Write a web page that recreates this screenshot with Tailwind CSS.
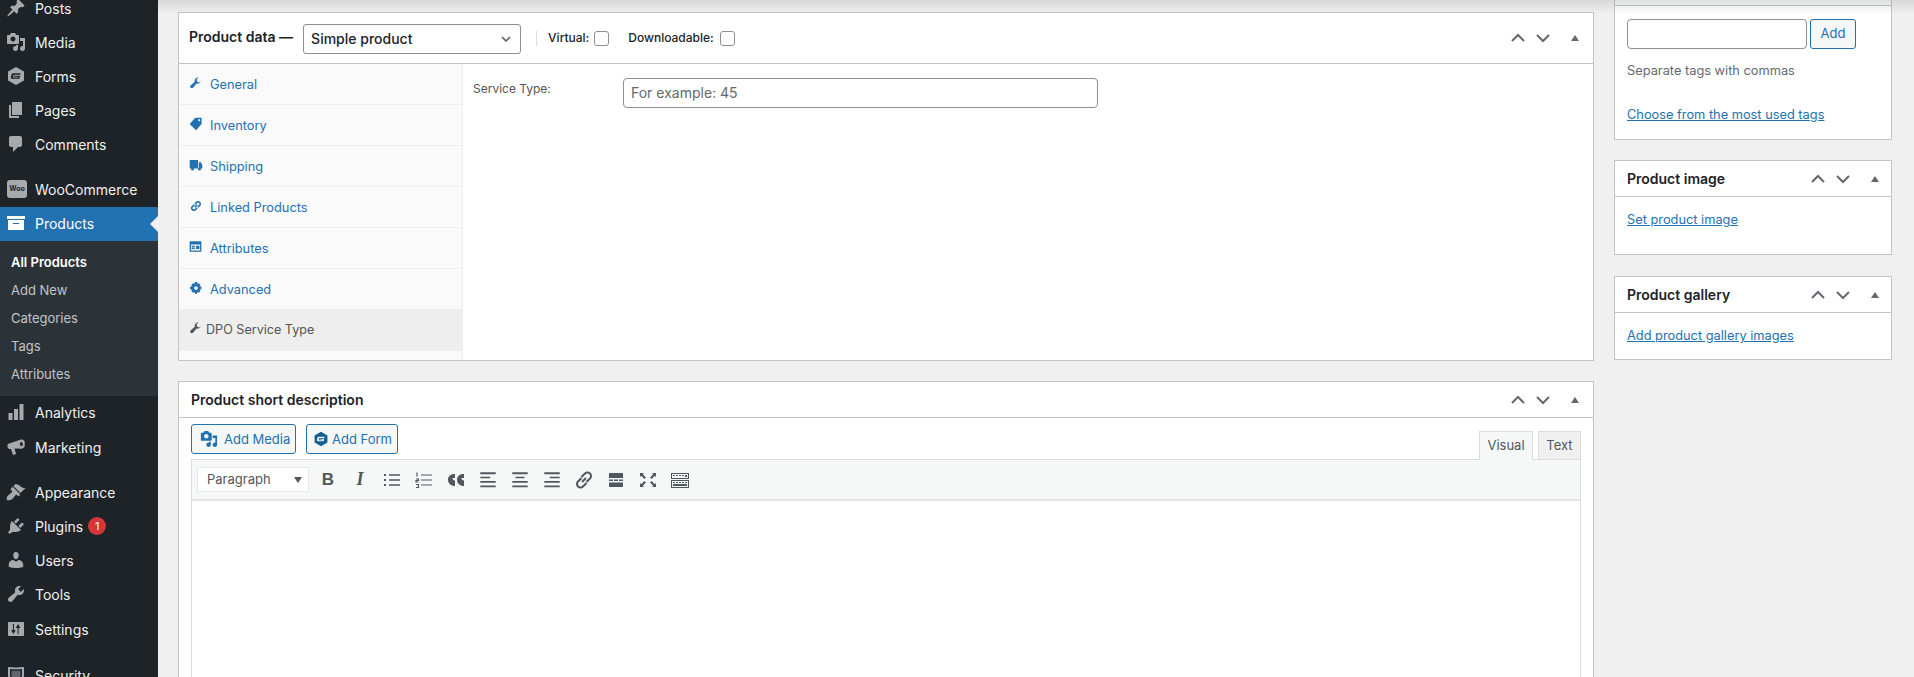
<!DOCTYPE html>
<html lang="en">
<head>
    <meta charset="UTF-8">
    <title>Edit product</title>
    <script src="https://cdn.jsdelivr.net/npm/@tailwindcss/browser@4"></script>
</head>
<body class="h-[677px] overflow-hidden bg-[#f0f0f1] font-[Inter,sans-serif] text-[#1d2327]">
<div class="flex h-[677px] overflow-hidden">

    <!-- Admin sidebar -->
    <aside class="w-[158px] shrink-0 h-[677px] overflow-hidden bg-[#1d2327] text-[14px] text-[#f0f0f1]">
        <ul class="-mt-[9px]">
            <li class="h-[34px] flex items-center">
                <svg class="w-[20px] h-[20px] ml-[6px] mr-[9px] fill-[#a7aaad]" viewBox="0 0 20 20"><path d="M10.44 3.02l1.82-1.82 6.36 6.35-1.83 1.82c-1.05-.68-2.48-.57-3.41.36l-.75.75c-.92.93-1.04 2.35-.35 3.41l-1.83 1.82-2.41-2.41-2.8 2.79c-.42.42-3.38 2.71-3.8 2.29s1.86-3.39 2.28-3.81l2.79-2.79L4.1 9.36l1.83-1.82c1.05.69 2.48.57 3.4-.36l.75-.75c.93-.92 1.05-2.35.36-3.41z"/></svg>
                Posts
            </li>
            <li class="h-[34px] flex items-center">
                <svg class="w-[20px] h-[20px] ml-[6px] mr-[9px] fill-[#a7aaad]" viewBox="0 0 20 20"><path d="M13 11V4c0-.55-.45-1-1-1h-1.67L9 1H5L3.67 3H2c-.55 0-1 .45-1 1v7c0 .55.45 1 1 1h10c.55 0 1-.45 1-1zM7 4.5c1.38 0 2.5 1.12 2.5 2.5S8.38 9.5 7 9.5 4.5 8.38 4.5 7 5.62 4.5 7 4.5zM14 6h5v10.5c0 1.38-1.12 2.5-2.5 2.5S14 17.88 14 16.5s1.12-2.5 2.5-2.5c.17 0 .34.02.5.05V9h-3V6zm-4 8.05V13h2v3.5c0 1.38-1.12 2.5-2.5 2.5S7 17.88 7 16.5 8.12 14 9.5 14c.17 0 .34.02.5.05z"/></svg>
                Media
            </li>
            <li class="h-[34px] flex items-center">
                <svg class="w-[20px] h-[20px] ml-[6px] mr-[9px] fill-[#a7aaad]" viewBox="0 0 20 20" fill-rule="evenodd"><path d="M10 1l8 4.500v9L10 19l-8-4.500v-9zM7.200 7.300c-.9 0-1.500.6-1.700 1.400l-.6 2.500c-.2.8.3 1.500 1.100 1.500h7.300l.7-2.900H8.200l-.2.9h4.100l-.2.8H7l.5-2.200c.1-.3.3-.5.6-.5h6.200l.2-1.500z"/></svg>
                Forms
            </li>
            <li class="h-[34px] flex items-center">
                <svg class="w-[20px] h-[20px] ml-[6px] mr-[9px] fill-[#a7aaad]" viewBox="0 0 20 20"><path d="M6 15V2h10v13H6zm-1 1h8v2H3V5h2v11z"/></svg>
                Pages
            </li>
            <li class="h-[34px] flex items-center">
                <svg class="w-[20px] h-[20px] ml-[6px] mr-[9px] fill-[#a7aaad]" viewBox="0 0 20 20"><path d="M5 2h9c1.100 0 2 .9 2 2v7c0 1.100-.9 2-2 2h-2l-5 5v-5H5c-1.100 0-2-.9-2-2V4c0-1.100.9-2 2-2z"/></svg>
                Comments
            </li>
            <li class="h-[34px] flex items-center mt-[12px] pb-[2px]">
                <span class="w-[20px] h-[18px] shrink-0 ml-[7px] mr-[8px] rounded-[3px] bg-[#a7aaad] text-[#1d2327] text-[7px] font-bold flex items-center justify-center">Woo</span>
                WooCommerce
            </li>
            <li class="relative h-[34px] flex items-center pb-[2px] bg-[#2271b1] text-white">
                <svg class="w-[20px] h-[20px] ml-[6px] mr-[9px] fill-white" viewBox="0 0 20 20" fill-rule="evenodd"><path d="M19 6V3H1v3zM2 7h16v10H2zm5 3v1h6v-1z"/></svg>
                Products
                <span class="absolute right-0 top-[9px] border-y-[8px] border-r-[8px] border-y-transparent border-r-[#f0f0f1]"></span>
            </li>
        </ul>
        <ul class="bg-[#2c3338] py-[8px] pl-[11px] text-[13px] text-[#c3c4c7]">
            <li class="h-[28px] flex items-center font-semibold text-white">All Products</li>
            <li class="h-[28px] flex items-center">Add New</li>
            <li class="h-[28px] flex items-center">Categories</li>
            <li class="h-[28px] flex items-center">Tags</li>
            <li class="h-[27px] flex items-center">Attributes</li>
        </ul>
        <ul>
            <li class="h-[34px] flex items-center pb-[2px]">
                <svg class="w-[20px] h-[20px] ml-[6px] mr-[9px] fill-[#a7aaad]" viewBox="0 0 20 20"><path d="M2.500 11h4v7h-4zM8 7h4v11H8zM13.500 2h4v16h-4z"/></svg>
                Analytics
            </li>
            <li class="h-[34px] flex items-center">
                <svg class="w-[20px] h-[20px] ml-[6px] mr-[9px] fill-[#a7aaad]" viewBox="0 0 20 20" fill-rule="evenodd"><path d="M15 2.500a3.300 3.300 0 0 1 3.500 4.700 3.300 3.300 0 0 1-2.500 4.500L8.500 11.500 10 17l-3 1-2-6H3.500C2.500 12 1.500 11 1.500 9.800V8.500c0-1 .7-1.800 1.700-2zM15 5c-1 .2-1.300 1.400-1 2.500s1.200 1.900 2 1.500 1-1.400.7-2.400S15.800 4.800 15 5z"/></svg>
                Marketing
            </li>
            <li class="h-[34px] flex items-center mt-[12px] pb-[2px]">
                <svg class="w-[20px] h-[20px] ml-[6px] mr-[9px] fill-[#a7aaad]" viewBox="0 0 20 20"><path d="M14.480 11.060L7.410 3.990l1.500-1.500c.5-.56 2.300-.47 3.510.32 1.210.8 1.430 1.280 2.910 2.100 1.180.64 2.450 1.260 4.450.85zm-.71.71L6.700 4.700 4.930 6.470c-.39.39-.39 1.020 0 1.410l1.060 1.060c.39.39.39 1.030 0 1.420-.6.6-1.430 1.110-2.210 1.690-.35.26-.7.53-1.010.84C1.430 13.230.1 16.200 1 18c1.800.9 4.770-.43 6.110-1.770.31-.31.58-.66.840-1.010.58-.78 1.090-1.610 1.690-2.210.39-.39 1.030-.39 1.420 0l1.060 1.060c.39.39 1.020.39 1.410 0z"/></svg>
                Appearance
            </li>
            <li class="h-[34px] flex items-center pb-[2px]">
                <svg class="w-[20px] h-[20px] ml-[6px] mr-[9px] fill-[#a7aaad]" viewBox="0 0 20 20"><path d="M13.110 4.360L9.870 7.600 8 5.730l3.240-3.240c.35-.34 1.050-.2 1.560.32.52.51.66 1.210.31 1.550zm-8 1.770l.91-1.120 9.010 9.010-1.190.84c-.71.71-2.630 1.160-3.820 1.160H6.140L4.900 17.260c-.59.59-1.540.59-2.120 0-.59-.58-.59-1.530 0-2.120l1.240-1.240v-3.880c0-1.130.4-3.190 1.090-3.890zm7.260 3.970l3.240-3.240c.34-.35 1.040-.21 1.550.31.52.51.66 1.210.31 1.550l-3.240 3.250z"/></svg>
                Plugins
                <span class="ml-[5px] w-[18px] h-[18px] rounded-full bg-[#d63638] text-white text-[11px] flex items-center justify-center">1</span>
            </li>
            <li class="h-[34px] flex items-center pb-[2px]">
                <svg class="w-[20px] h-[20px] ml-[6px] mr-[9px] fill-[#a7aaad]" viewBox="0 0 20 20"><path d="M10 9.250c-2.270 0-2.730-3.440-2.730-3.440C7 4.020 7.820 2 9.970 2c2.160 0 2.980 2.020 2.710 3.810 0 0-.41 3.440-2.680 3.440zm0 2.570L12.720 10c2.390 0 4.520 2.330 4.520 4.530v2.490s-3.650 1.130-7.240 1.130c-3.650 0-7.240-1.130-7.240-1.130v-2.490c0-2.250 1.940-4.480 4.470-4.480z"/></svg>
                Users
            </li>
            <li class="h-[34px] flex items-center pb-[2px]">
                <svg class="w-[20px] h-[20px] ml-[6px] mr-[9px] fill-[#a7aaad]" viewBox="0 0 20 20"><path d="M16.680 9.770c-1.340 1.340-3.300 1.670-4.950.99l-5.410 6.520c-.99.99-2.590.99-3.580 0s-.99-2.590 0-3.570l6.520-5.420c-.68-1.650-.35-3.610.99-4.950 1.280-1.280 3.120-1.620 4.720-1.060l-2.890 2.890 2.820 2.820 2.860-2.870c.53 1.580.18 3.390-1.080 4.650z"/></svg>
                Tools
            </li>
            <li class="h-[34px] flex items-center">
                <svg class="w-[20px] h-[20px] ml-[6px] mr-[9px] fill-[#a7aaad]" viewBox="0 0 20 20" fill-rule="evenodd"><path d="M3 3h14c.6 0 1 .4 1 1v12c0 .6-.4 1-1 1H3c-.6 0-1-.4-1-1V4c0-.6.4-1 1-1zm3.900 2v6H5l2.400 4 2.400-4H8V5zm5.700 10V9h1.900l-2.400-4-2.400 4h1.900v6z"/></svg>
                Settings
            </li>
            <li class="h-[34px] flex items-center mt-[12px]">
                <svg class="w-[20px] h-[20px] ml-[6px] mr-[9px] fill-[#a7aaad]" viewBox="0 0 20 20" fill-rule="evenodd"><path d="M2 2c5 .6 11 .6 16 0v8c0 4-4 7-8 9-4-2-8-5-8-9zm2 2v6c0 3 3 5 6 7 3-2 6-4 6-7V4c-4 .4-8 .4-12 0z"/><path d="M5.500 5.500c3 .3 6 .3 9 0V10c0 2-2 4-4.500 5.500C7.500 14 5.500 12 5.500 10z" opacity=".5"/></svg>
                Security
            </li>
        </ul>
    </aside>

    <!-- Content -->
    <div class="relative flex-1 flex pl-[20px] gap-[20px]">
        <div class="absolute left-0 right-0 top-0 h-[14px] bg-gradient-to-b from-black/10 to-transparent"></div>

        <main class="w-[1416px] shrink-0 pt-[12px]">
            <!-- Product data -->
            <section class="h-[349px] bg-white border border-[#c3c4c7] flex flex-col">
                <div class="h-[51px] shrink-0 border-b border-[#c3c4c7] flex items-center pl-[10px] pr-[14px] text-[12px] font-medium">
                    <h2 class="text-[14px] font-semibold mr-[10px] -mt-[3px]">Product data —</h2>
                    <div class="w-[218px] h-[30px] shrink-0 -mb-[1px] border border-[#8c8f94] rounded-[3px] flex items-center justify-between pl-[7px] pr-[8px] text-[14px]">
                        Simple product
                        <svg class="w-[12px] h-[12px] fill-none stroke-[#50575e] stroke-[1.5]" viewBox="0 0 12 12"><path d="M2 4l4 4 4-4"/></svg>
                    </div>
                    <span class="w-px h-[15px] bg-[#dcdcde] ml-[15px] mr-[11px]"></span>
                    Virtual:
                    <span class="w-[15px] h-[15px] shrink-0 ml-[5px] border border-[#8c8f94] rounded-[3px]"></span>
                    <span class="ml-[19px]">Downloadable:</span>
                    <span class="w-[15px] h-[15px] shrink-0 ml-[6px] border border-[#8c8f94] rounded-[3px]"></span>
                    <div class="ml-auto flex items-center gap-[11px]">
                        <svg class="w-[14px] h-[14px] fill-none stroke-[#646970] stroke-2" viewBox="0 0 14 14"><path d="M1 10l6-6 6 6"/></svg>
                        <svg class="w-[14px] h-[14px] fill-none stroke-[#646970] stroke-2" viewBox="0 0 14 14"><path d="M1 4l6 6 6-6"/></svg>
                        <span class="ml-[10px] border-x-[4px] border-b-[6px] border-x-transparent border-b-[#646970]"></span>
                    </div>
                </div>
                <div class="flex-1 flex">
                    <ul class="w-[284px] shrink-0 bg-[#fafafa] border-r border-[#eeeeee] text-[12.8px] text-[#2271b1]">
                        <li class="h-[41px] pt-[2px] border-b border-[#eeeeee] flex items-center pl-[11px]">
                            <svg class="w-[12px] h-[12px] -mt-[4px] mr-[8px] fill-[#2271b1]" viewBox="0 0 20 20"><path d="M18 7c-1 3-4 5-7 4l-6 7c-1 1-3 1-4 0s-1-3 0-4l7-6c-1-3 1-6 4-7l2 0-3 3 1 4 4 1 3-3z"/></svg>
                            General
                        </li>
                        <li class="h-[41px] pt-[2px] border-b border-[#eeeeee] flex items-center pl-[10px]">
                            <svg class="w-[14px] h-[14px] -mt-[5px] mr-[7px] fill-[#2271b1]" viewBox="0 0 20 20" fill-rule="evenodd"><path d="M9 1h9v9l-8 9-9-9zm5.500 2a1.500 1.500 0 1 0 .01 0z"/></svg>
                            Inventory
                        </li>
                        <li class="h-[41px] pt-[2px] border-b border-[#eeeeee] flex items-center pl-[10px]">
                            <svg class="w-[14px] h-[14px] -mt-[4px] mr-[7px] fill-[#2271b1]" viewBox="0 0 20 20"><path d="M1 3h12v12H1zM14 6h3l2 4v5h-5z"/><circle cx="5" cy="16" r="2"/><circle cx="15" cy="16" r="2"/></svg>
                            Shipping
                        </li>
                        <li class="h-[41px] pt-[2px] border-b border-[#eeeeee] flex items-center pl-[11px]">
                            <svg class="w-[12px] h-[12px] -mt-[4px] mr-[8px] fill-none stroke-[#2271b1] stroke-[2.500]" viewBox="0 0 20 20"><path d="M8 12l4-4M7 8l-3 3a3.500 3.500 0 0 0 5 5l3-3M13 12l3-3a3.500 3.500 0 0 0-5-5L8 7"/></svg>
                            Linked Products
                        </li>
                        <li class="h-[41px] pt-[1px] border-b border-[#eeeeee] flex items-center pl-[10px]">
                            <svg class="w-[13px] h-[13px] -mt-[4px] mr-[8px] fill-[#2271b1]" viewBox="0 0 20 20" fill-rule="evenodd"><path d="M1 2h18v16H1zm2 5v9h14V7zm1 2h5v2H4zm0 3h5v2H4zm7-3h5v5h-5z"/></svg>
                            Attributes
                        </li>
                        <li class="h-[40px] pt-[1px] flex items-center pl-[11px]">
                            <svg class="w-[12px] h-[12px] -mt-[4px] mr-[8px] fill-[#2271b1]" viewBox="0 0 20 20" fill-rule="evenodd"><path d="M8 0h4l.5 3 2-1 3 3-1.500 2 3 1v4l-3 .5 1.500 2.500-3 3-2-1.500-1 3H8l-.5-3-2.500 1.500-3-3 1.500-2.500L0 12V8l3.500-1L2 5l3-3 2.500 1zm2 7a3 3 0 1 0 .01 0z"/></svg>
                            Advanced
                        </li>
                        <li class="h-[42px] bg-[#eeeeee] flex items-center pl-[11px] text-[12.600px] text-[#555555]">
                            <svg class="w-[12px] h-[12px] -mt-[4px] mr-[4px] fill-[#555555]" viewBox="0 0 20 20"><path d="M18 7c-1 3-4 5-7 4l-6 7c-1 1-3 1-4 0s-1-3 0-4l7-6c-1-3 1-6 4-7l2 0-3 3 1 4 4 1 3-3z"/></svg>
                            DPO Service Type
                        </li>
                    </ul>
                    <div class="flex-1 pt-[14px] pl-[10px] flex items-start">
                        <label class="w-[150px] pt-[2px] text-[12px] text-[#555555]">Service Type:</label>
                        <div class="w-[475px] h-[30px] pb-[1px] bg-white border border-[#8c8f94] rounded-[4px] flex items-center pl-[7px] text-[14px] text-[#646970]">For example: 45</div>
                    </div>
                </div>
            </section>

            <!-- Product short description -->
            <section class="mt-[20px] h-[320px] bg-white border border-[#c3c4c7]">
                <div class="h-[36px] border-b border-[#c3c4c7] flex items-center pl-[12px] pr-[14px]">
                    <h2 class="text-[14px] font-semibold">Product short description</h2>
                    <div class="ml-auto flex items-center gap-[11px]">
                        <svg class="w-[14px] h-[14px] fill-none stroke-[#646970] stroke-2" viewBox="0 0 14 14"><path d="M1 10l6-6 6 6"/></svg>
                        <svg class="w-[14px] h-[14px] fill-none stroke-[#646970] stroke-2" viewBox="0 0 14 14"><path d="M1 4l6 6 6-6"/></svg>
                        <span class="ml-[10px] border-x-[4px] border-b-[6px] border-x-transparent border-b-[#646970]"></span>
                    </div>
                </div>
                <div class="px-[12px] pt-[6px]">
                    <div class="flex items-end">
                        <div class="flex gap-[10px] pb-[5px] text-[13px] whitespace-nowrap text-[#2271b1]">
                            <div class="w-[105px] h-[30px] pt-[2px] bg-[#f6f7f7] border border-[#2271b1] rounded-[3px] flex items-center pl-[8px]">
                                <svg class="w-[18px] h-[18px] -mt-[2px] mr-[6px] fill-[#2271b1]" viewBox="0 0 20 20"><path d="M13 11V4c0-.55-.45-1-1-1h-1.670L9 1H5L3.670 3H2c-.55 0-1 .45-1 1v7c0 .55.45 1 1 1h10c.55 0 1-.45 1-1zM7 4.500c1.380 0 2.500 1.120 2.500 2.500S8.380 9.500 7 9.500 4.500 8.380 4.500 7 5.620 4.500 7 4.500zM14 6h5v10.500c0 1.380-1.120 2.500-2.500 2.500S14 17.880 14 16.500s1.120-2.500 2.500-2.500c.17 0 .34.02.5.05V9h-3V6zm-4 8.050V13h2v3.500c0 1.380-1.120 2.500-2.500 2.500S7 17.880 7 16.500 8.120 14 9.500 14c.17 0 .34.02.5.05z"/></svg>
                                Add Media
                            </div>
                            <div class="w-[92px] h-[30px] pt-[2px] bg-[#f6f7f7] border border-[#2271b1] rounded-[3px] flex items-center pl-[6px]">
                                <svg class="w-[16px] h-[16px] -mt-[2px] mr-[3px] fill-[#135e96]" viewBox="0 0 20 20" fill-rule="evenodd"><path d="M10 1l8 4.500v9L10 19l-8-4.500v-9zM7.200 7.300c-.9 0-1.500.6-1.700 1.400l-.6 2.500c-.2.8.3 1.500 1.100 1.500h7.300l.7-2.900H8.200l-.2.9h4.100l-.2.8H7l.5-2.200c.1-.3.3-.5.6-.5h6.200l.2-1.500z"/></svg>
                                Add Form
                            </div>
                        </div>
                        <div class="ml-auto flex items-end gap-[5px] text-[13px] text-[#50575e]">
                            <div class="w-[54px] h-[29px] -mb-px relative bg-[#f6f7f7] border border-b-0 border-[#dcdcde] flex items-center justify-center">Visual</div>
                            <div class="w-[43px] h-[28px] bg-[#f0f0f1] border border-b-0 border-[#dcdcde] flex items-center justify-center">Text</div>
                        </div>
                    </div>
                    <div class="h-[300px] border border-[#dcdcde]">
                        <div class="h-[41px] bg-[#f6f7f7] border-b-2 border-[#e2e4e7] flex items-center pl-[5px] text-[#50575e]">
                            <div class="w-[112px] h-[25px] shrink-0 mr-[3px] bg-white border border-[#e7e8ea] flex items-center justify-between pl-[9px] pr-[6px] text-[13px]">
                                Paragraph
                                <span class="border-x-[4px] border-t-[6px] border-x-transparent border-t-[#50575e]"></span>
                            </div>
                            <span class="w-[32px] text-center text-[17px] font-bold font-[Liberation_Sans,sans-serif]">B</span>
                            <span class="w-[32px] text-center text-[18px] italic font-bold font-[Liberation_Serif,serif]">I</span>
                            <span class="w-[32px] flex justify-center"><svg class="w-[20px] h-[20px] fill-none stroke-[#50575e] stroke-[1.300]" viewBox="0 0 20 20"><path d="M7 5h11M7 10h11M7 15h11"/><path class="stroke-2" d="M2 5h2M2 10h2M2 15h2"/></svg></span>
                            <span class="w-[32px] flex justify-center"><svg class="w-[20px] h-[20px] fill-none stroke-[#50575e] stroke-[1.200]" viewBox="0 0 20 20"><path d="M7 5h11M7 10h11M7 15h11M3 2.500v4M2 9h2.500v1.500H2V12h2.500M2 14.500h2.500v3H2"/></svg></span>
                            <span class="w-[32px] flex justify-center"><svg class="w-[20px] h-[20px] fill-[#50575e]" viewBox="0 0 20 20"><path d="M9 4v4H6.500c0 1.500.8 2.500 2.500 2.500V16c-4 0-7-2.500-7-6.500C2 6 5 4 9 4zM18 4v4h-2.500c0 1.500.8 2.500 2.500 2.500V16c-4 0-7-2.500-7-6.500C11 6 14 4 18 4z"/></svg></span>
                            <span class="w-[32px] flex justify-center"><svg class="w-[22px] h-[22px] fill-[#50575e]" viewBox="0 0 20 20"><path d="M3 3h14v1.700H3zM3 7h9v1.500H3zM3 11h14v1.500H3zM3 15h14v1.700H3z"/></svg></span>
                            <span class="w-[32px] flex justify-center"><svg class="w-[22px] h-[22px] fill-[#50575e]" viewBox="0 0 20 20"><path d="M3 3h14v1.700H3zM6 7h8v1.500H6zM3 11h14v1.500H3zM3 15h14v1.700H3z"/></svg></span>
                            <span class="w-[32px] flex justify-center"><svg class="w-[22px] h-[22px] fill-[#50575e]" viewBox="0 0 20 20"><path d="M3 3h14v1.700H3zM8 7h9v1.500H8zM3 11h14v1.500H3zM3 15h14v1.700H3z"/></svg></span>
                            <span class="w-[32px] flex justify-center"><svg class="w-[20px] h-[20px] fill-none stroke-[#50575e] stroke-2" viewBox="0 0 20 20"><path d="M8 12l4-4M7.500 8L4 11.500a3.500 3.500 0 0 0 5 5l3.500-3.500M12.500 12L16 8.500a3.500 3.500 0 0 0-5-5L7.500 7"/></svg></span>
                            <span class="w-[32px] flex justify-center"><svg class="w-[20px] h-[20px] fill-[#50575e]" viewBox="0 0 20 20"><path d="M3 3h14v5H3zM3 9.500h4V11H3zM8 9.500h4V11H8zM13 9.500h4V11h-4zM3 12.500h14V17H3z"/></svg></span>
                            <span class="w-[32px] flex justify-center"><svg class="w-[20px] h-[20px] fill-[#50575e]" viewBox="0 0 20 20"><path d="M2 3h4L4.800 4.200 8 7.400 6.400 9 3.200 5.800 2 7zM18 3v4l-1.200-1.200L13.600 9 12 7.400l3.200-3.200L14 3zM2 17v-4l1.200 1.200 3.200-3.200L8 12.600l-3.200 3.200L6 17zM18 17h-4l1.200-1.200-3.200-3.200 1.600-1.600 3.200 3.200L18 13z"/></svg></span>
                            <span class="w-[32px] flex justify-center"><svg class="w-[20px] h-[20px] fill-[#50575e]" viewBox="0 0 20 20" fill-rule="evenodd"><path d="M1 3h18v6H1zm1 1v4h16V4zm1 1h2v1H3zm3 0h2v1H6zm3 0h2v1H9zm3 0h2v1h-2zm3 0h2v2h-2zM1 10h18v8H1zm1 1v6h16v-6zm1 1h2v1H3zm3 0h2v1H6zm3 0h2v1H9zm3 0h2v1h-2zm3 0h2v1h-2zM3 14h14v2H3z"/></svg></span>
                        </div>
                    </div>
                </div>
            </section>
        </main>

        <!-- Right column -->
        <div class="w-[278px] shrink-0">
            <section class="h-[140px] bg-white border border-t-0 border-[#c3c4c7]">
                <div class="h-[6px] bg-[#f6f7f7] border-b border-[#c3c4c7]"></div>
                <div class="pt-[13px] pl-[12px]">
                    <div class="flex gap-[3px]">
                        <div class="w-[180px] h-[30px] bg-white border border-[#8c8f94] rounded-[4px]"></div>
                        <div class="w-[46px] h-[30px] bg-[#f6f7f7] border border-[#2271b1] rounded-[3px] flex items-center justify-center text-[13px] text-[#2271b1]">Add</div>
                    </div>
                    <p class="mt-[13px] text-[12.800px] leading-[18px] text-[#646970]">Separate tags with commas</p>
                    <a class="block mt-[26px] text-[12.800px] leading-[18px] text-[#2271b1] underline">Choose from the most used tags</a>
                </div>
            </section>
            <section class="mt-[20px] h-[95px] bg-white border border-[#c3c4c7]">
                <div class="h-[36px] border-b border-[#c3c4c7] flex items-center pl-[12px] pr-[12px]">
                    <h2 class="text-[14px] font-semibold">Product image</h2>
                    <div class="ml-auto flex items-center gap-[11px]">
                        <svg class="w-[14px] h-[14px] fill-none stroke-[#646970] stroke-2" viewBox="0 0 14 14"><path d="M1 10l6-6 6 6"/></svg>
                        <svg class="w-[14px] h-[14px] fill-none stroke-[#646970] stroke-2" viewBox="0 0 14 14"><path d="M1 4l6 6 6-6"/></svg>
                        <span class="ml-[10px] border-x-[4px] border-b-[6px] border-x-transparent border-b-[#646970]"></span>
                    </div>
                </div>
                <a class="block pl-[12px] pt-[14px] text-[12.800px] leading-[18px] text-[#2271b1] underline">Set product image</a>
            </section>
            <section class="mt-[21px] h-[84px] bg-white border border-[#c3c4c7]">
                <div class="h-[36px] border-b border-[#c3c4c7] flex items-center pl-[12px] pr-[12px]">
                    <h2 class="text-[14px] font-semibold">Product gallery</h2>
                    <div class="ml-auto flex items-center gap-[11px]">
                        <svg class="w-[14px] h-[14px] fill-none stroke-[#646970] stroke-2" viewBox="0 0 14 14"><path d="M1 10l6-6 6 6"/></svg>
                        <svg class="w-[14px] h-[14px] fill-none stroke-[#646970] stroke-2" viewBox="0 0 14 14"><path d="M1 4l6 6 6-6"/></svg>
                        <span class="ml-[10px] border-x-[4px] border-b-[6px] border-x-transparent border-b-[#646970]"></span>
                    </div>
                </div>
                <a class="block pl-[12px] pt-[14px] text-[12.800px] leading-[18px] text-[#2271b1] underline">Add product gallery images</a>
            </section>
        </div>
    </div>
</div>
</body>
</html>
